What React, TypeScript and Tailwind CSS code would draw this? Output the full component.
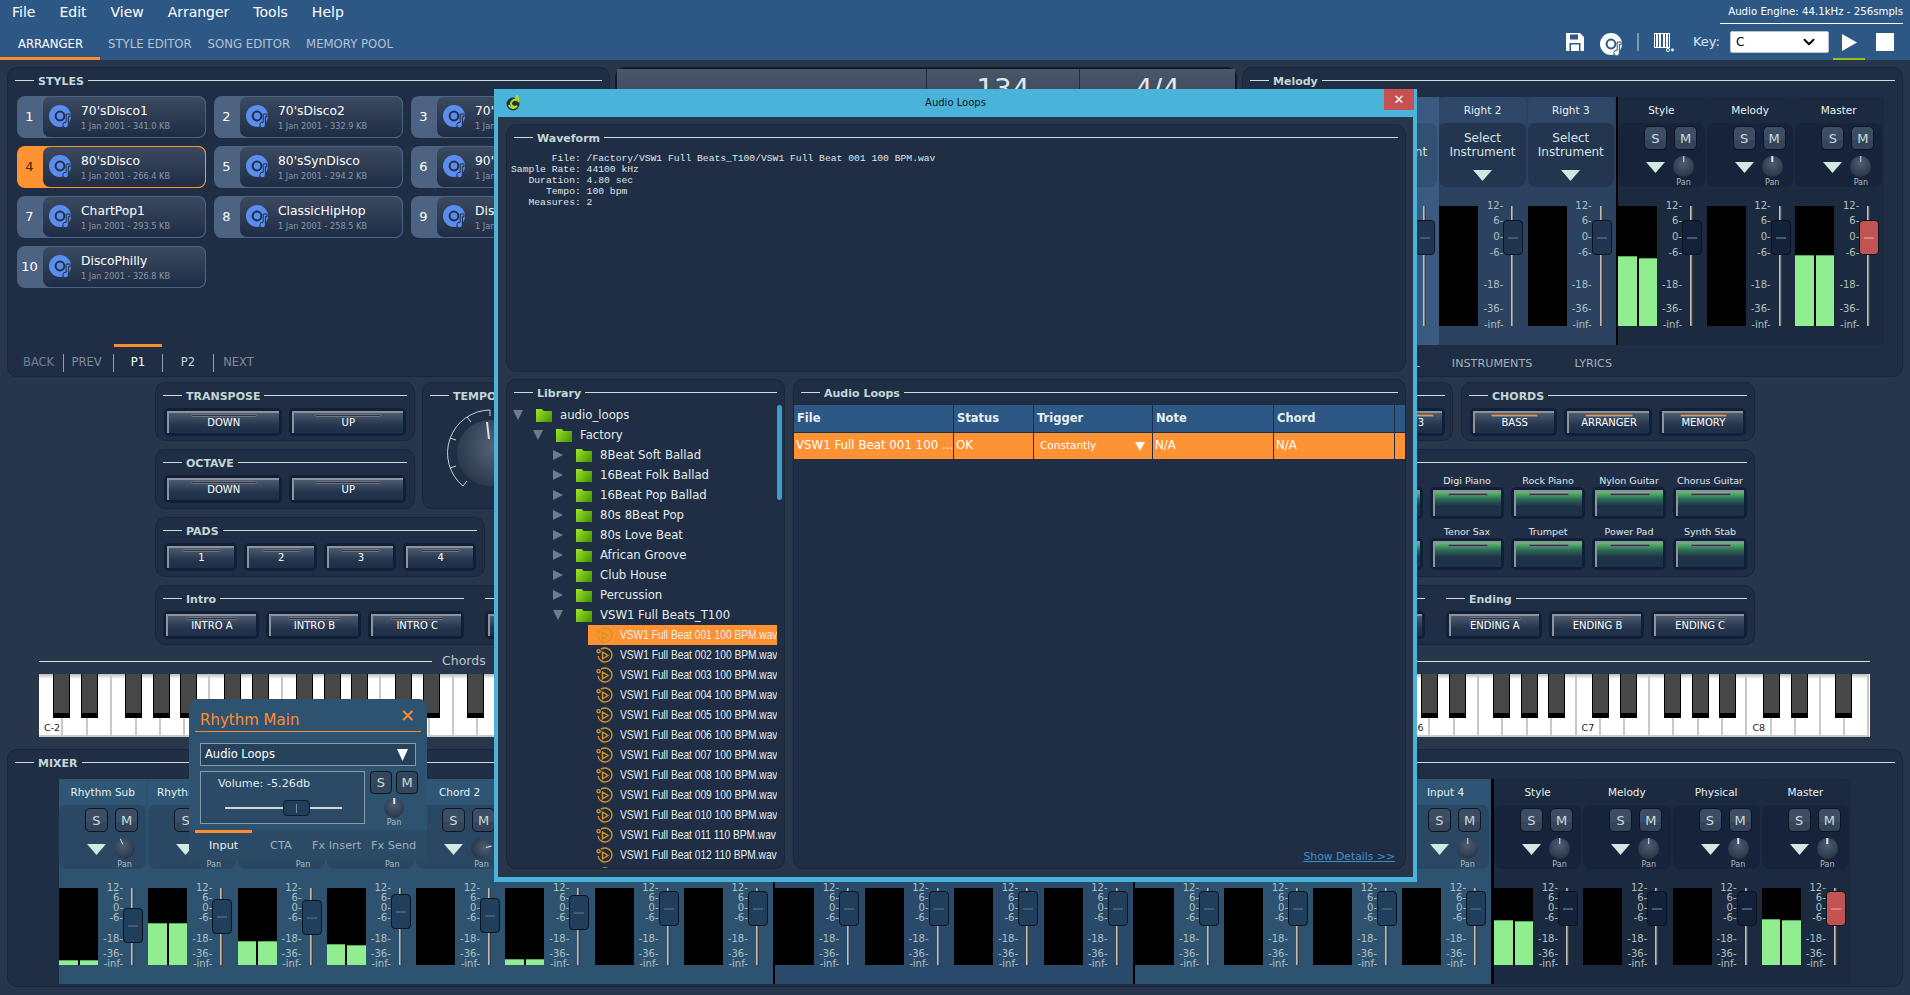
import React from "react";
import { ChevronDown } from "lucide-react";

const BOLD = "font-['DejaVu_Sans',sans-serif] font-bold";

function Section({
  title,
  className = "",
  children,
}: {
  title: string;
  className?: string;
  children?: React.ReactNode;
}) {
  return (
    <section
      className={`flex flex-col rounded-[10px] border border-[#19263a] bg-[#1f2e45] px-[7px] ${className}`}
    >
      <Title text={title} />
      {children}
    </section>
  );
}

function Title({ text }: { text: string }) {
  return (
    <div className="flex h-[25px] shrink-0 items-center gap-[4px]">
      <div className="h-px w-[19px] bg-[#c9e0dc]" />
      <span className={`${BOLD} pt-[2px] text-[11px] leading-none text-[#c3d8d5]`}>
        {text}
      </span>
      <div className="h-px flex-1 bg-[#c9e0dc]" />
    </div>
  );
}

function Btn({
  label,
  className = "",
  led = "gray",
  green = false,
}: {
  label?: string;
  className?: string;
  led?: "gray" | "orange";
  green?: boolean;
}) {
  return (
    <div
      className={`rounded-[5px] bg-[#0f2039] p-[3px] ${className}`}
    >
      <div
        className={`relative flex h-full items-center justify-center border-l-2 border-t-2 border-[#8d929b] text-[10px] leading-none text-white ${
          green
            ? "bg-[linear-gradient(#5cc06c_0%,#2c6a55_30%,#1f3049_60%)]"
            : "bg-[linear-gradient(#4c5b6e_0%,#24354d_60%,#1e2e46_100%)]"
        }`}
      >
        <div
          className={`absolute left-[20%] right-[20%] top-[1px] h-[3px] rounded-full border border-[#6f7480] ${
            led === "orange" ? "bg-[#ff8c2e]" : "bg-[#2a3342]"
          }`}
        />
        {label}
      </div>
    </div>
  );
}

function DiscIcon({ color = "#5b8def", hole = "#1f2e45" }: { color?: string; hole?: string }) {
  return (
    <svg viewBox="0 0 26 26" className="h-[26px] w-[26px] shrink-0">
      <circle cx="11" cy="12" r="11" fill={color} />
      <circle cx="11" cy="12" r="4.4" fill="none" stroke={hole} strokeWidth="2" />
      <path d="M18 10h3v3l-1.6-.6V21a2.8 2.8 0 1 1-2.2-2.7V10z" fill={color} stroke={hole} strokeWidth="1" />
    </svg>
  );
}

const styles = [
  ["70'sDisco1", "1 Jan 2001 - 341.0 KB"],
  ["70'sDisco2", "1 Jan 2001 - 332.9 KB"],
  ["70'sDisco3", "1 Jan 2001 - 301.1 KB"],
  ["80'sDisco", "1 Jan 2001 - 266.4 KB"],
  ["80'sSynDisco", "1 Jan 2001 - 294.2 KB"],
  ["90'sDisco", "1 Jan 2001 - 287.6 KB"],
  ["ChartPop1", "1 Jan 2001 - 293.5 KB"],
  ["ClassicHipHop", "1 Jan 2001 - 258.5 KB"],
  ["DiscoFunk", "1 Jan 2001 - 310.2 KB"],
  ["DiscoPhilly", "1 Jan 2001 - 326.8 KB"],
];

function StyleCard({ n, name, sub }: { n: number; name: string; sub: string }) {
  const active = n === 4;
  return (
    <div
      className={`flex h-[42px] w-[189px] rounded-[8px] ${active ? "bg-[#ff9233]" : "bg-[#4d6382]"}`}
    >
      <div
        className={`flex w-[25px] items-center justify-center text-[13px] ${active ? "text-[#3a2a15]" : "text-white"}`}
      >
        {n}
      </div>
      <div
        className={`flex flex-1 items-center gap-[6px] rounded-[8px] border bg-[linear-gradient(#3b4a60,#1e2d45)] pl-[6px] ${
          active ? "border-[#ff9233]" : "border-[#4d6382]"
        }`}
      >
        <DiscIcon />
        <div className="flex flex-col">
          <span className="pt-[1px] text-[12.3px] leading-[17px] text-white">{name}</span>
          <span className="text-[8.2px] leading-[13px] text-[#8b96a5]">{sub}</span>
        </div>
      </div>
    </div>
  );
}

const scaleLabels = ["12-", "6-", "0-", "-6-", "-18-", "-36-", "-inf-"];
const tallPos = [0, 15, 31, 47, 79, 103, 119];
const shortPos = [0, 10, 20, 30, 51, 66, 76];

type ChannelProps = {
  name: string;
  tall?: boolean;
  select?: boolean;
  tone: "sel" | "mid" | "dark" | "blue" | "navy";
  levels?: [number, number];
  fader: number;
  red?: boolean;
  pan?: number;
};

const tones = {
  sel: { root: "bg-[#3a5a80]", head: "bg-[#3a5a80]", body: "bg-[#334f72]", thumb: "bg-[#203650]" },
  mid: { root: "bg-[#2b4261]", head: "bg-[#2f4768]", body: "bg-[#24364f]", thumb: "bg-[#203650]" },
  dark: { root: "bg-[#1c2a3f]", head: "bg-[#1c2a40]", body: "bg-[#16233a]", thumb: "bg-[#14213a]" },
  blue: { root: "bg-[#2e5370]", head: "bg-[#2f5775]", body: "bg-[#2a4763]", thumb: "bg-[#1f3f5c]" },
  navy: { root: "bg-[#2a4a6c]", head: "bg-[#2c4f70]", body: "bg-[#26425f]", thumb: "bg-[#1f3f5c]" },
};

function Knob({ angle = 0, size = "md" }: { angle?: number; size?: "md" | "sm" }) {
  return (
    <div
      style={{ rotate: `${angle}deg` }}
      className={`relative rounded-full bg-[radial-gradient(circle_at_50%_35%,#4e5d72,#1f2b3d)] ${
        size === "md" ? "h-[21px] w-[21px]" : "h-[20px] w-[20px]"
      }`}
    >
      <div className="absolute left-1/2 top-0 h-[6px] w-[1.5px] -translate-x-1/2 bg-[#dfe8e8]" />
    </div>
  );
}

function SmBtn({ t }: { t: string }) {
  return (
    <div className="flex h-[24px] w-[23px] items-center justify-center rounded-[5px] border border-[#0c1522] bg-[linear-gradient(#3d4d63_60%,#34445a_60%)] text-[13px] leading-none text-[#c9dad9]">
      {t}
    </div>
  );
}

function Arrow({ className = "" }: { className?: string }) {
  return (
    <svg viewBox="0 0 19 11" className={`h-[11px] w-[19px] ${className}`}>
      <polygon points="0,0 19,0 9.5,11" fill="#d2e8e2" />
    </svg>
  );
}

function Channel({ name, tall, select, tone, levels, fader, red, pan = 0 }: ChannelProps) {
  const c = tones[tone];
  const pos = tall ? tallPos : shortPos;
  return (
    <div className={`flex min-w-0 flex-1 flex-col ${c.root}`}>
      <div
        className={`mr-[2px] flex h-[26px] items-center justify-center rounded-t-[6px] text-[10.5px] leading-none text-[#e8f0f0] ${c.head}`}
      >
        {name}
      </div>
      <div className={`mr-[2px] h-[64px] rounded-[8px] ${c.body}`}>
        {select ? (
          <div className="flex flex-col items-center pt-[8px] text-center text-[12px] leading-[14px] text-[#d5e2e2]">
            <span>Select</span>
            <span>Instrument</span>
            <Arrow className="mt-[11px]" />
          </div>
        ) : (
          <div className="flex flex-col pl-[26px] pt-[3px]">
            <div className="flex gap-[7px]">
              <SmBtn t="S" />
              <SmBtn t="M" />
            </div>
            <div className="mt-[6px] flex items-start gap-[8px] pl-[2px]">
              <Arrow className="mt-[6px] shrink-0" />
              <div className="flex flex-col items-center">
                <Knob angle={pan} />
                <span className="text-[8px] leading-[11px] text-[#aebcbc]">Pan</span>
              </div>
            </div>
          </div>
        )}
      </div>
      <div className={`flex py-[19px] ${tall ? "h-[158px]" : "h-[115px]"}`}>
        <div className="flex w-[39px] items-end gap-[2px] bg-black">
          {levels &&
            levels.map((h, i) => (
              <div
                key={i}
                style={{ height: h }}
                className="flex-1 border-t border-[#5fa860] bg-[#90ee90]"
              />
            ))}
        </div>
        <div className="relative w-[25px]">
          {scaleLabels.map((s, i) => (
            <span
              key={s}
              style={{ top: pos[i] - 6 }}
              className="absolute right-0 text-[10px] leading-[12px] text-[#b0c0c0]"
            >
              {s}
            </span>
          ))}
        </div>
        <div className="relative w-[20px]">
          <div className="absolute bottom-0 left-[8px] top-0 w-[3px] bg-[linear-gradient(90deg,#d8d8d8,#777_60%,#111)]" />
          <div
            style={{ top: fader }}
            className={`absolute left-0 flex h-[35px] w-[20px] items-center justify-center rounded-[4px] border border-[#0b1320] ${
              red ? "bg-[#c25353]" : c.thumb
            }`}
          >
            <div className={`h-[2px] w-[10px] ${red ? "bg-[#d98080]" : "bg-[#4a5a6c]"}`} />
          </div>
        </div>
      </div>
    </div>
  );
}

const whiteKeys = Array.from({ length: 75 });
const blackOffsets = [14, 42, 86, 114, 141];
const blackKeys: number[] = [];
for (let o = 0; o < 11; o++) {
  blackOffsets.forEach((b, i) => {
    const x = o * 171 + b;
    if (x < 1820 && !(o === 10 && i > 2)) blackKeys.push(x);
  });
}
const octaveLabels = ["C-2", "C-1", "C0", "C1", "C2", "C3", "C4", "C5", "C6", "C7", "C8"];

function Keyboard() {
  return (
    <div className="relative ml-[39px] flex h-[63px] w-[1831px] bg-white">
      {whiteKeys.map((_, i) => (
        <div
          key={i}
          className="relative h-full flex-1 border-b-2 border-r-2 border-[#c9c9c9] bg-[linear-gradient(#bbb_0,#fff_5px)]"
        >
          {i % 7 === 0 && (
            <span className="absolute bottom-[3px] left-[5px] text-[9.5px] leading-none text-[#222]">
              {octaveLabels[i / 7]}
            </span>
          )}
        </div>
      ))}
      {blackKeys.map((x) => (
        <div
          key={x}
          style={{ left: x }}
          className="absolute top-0 h-[44px] w-[17px] border-x border-b-[5px] border-black bg-[#474747]"
        />
      ))}
    </div>
  );
}

function FileIcon() {
  return (
    <svg viewBox="0 0 17 17" className="h-[17px] w-[17px] shrink-0" fill="none" stroke="#d4951f" strokeWidth="1.4">
      <path d="M5 2.2A7 7 0 1 1 2 9" />
      <circle cx="2.6" cy="4.2" r="1.6" />
      <polygon points="6.5,5.2 12,8.5 6.5,11.8" />
    </svg>
  );
}

function Folder() {
  return (
    <svg viewBox="0 0 16 13" className="h-[13px] w-[16px] shrink-0">
      <defs>
        <linearGradient id="fg" x1="0" y1="0" x2="1" y2="0.6">
          <stop offset="0" stopColor="#a2e52a" />
          <stop offset="1" stopColor="#4f9e05" />
        </linearGradient>
      </defs>
      <path d="M0 0h6l1.5 2H16v11H0z" fill="url(#fg)" />
    </svg>
  );
}

function TreeArrow({ open }: { open: boolean }) {
  return (
    <svg viewBox="0 0 10 10" className="h-[10px] w-[10px] shrink-0">
      <polygon points={open ? "0,0 10,0 5,10" : "0,0 10,5 0,10"} fill="#6f7b88" />
    </svg>
  );
}

const folders = [
  "8Beat Soft Ballad",
  "16Beat Folk Ballad",
  "16Beat Pop Ballad",
  "80s 8Beat Pop",
  "80s Love Beat",
  "African Groove",
  "Club House",
  "Percussion",
];

const files = [
  "001 100", "002 100", "003 100", "004 100", "005 100", "006 100", "007 100",
  "008 100", "009 100", "010 100", "011 110", "012 110",
];

function TreeRow({ depth, name, open }: { depth: number; name: string; open: boolean }) {
  const pad = ["pl-[6px]", "pl-[26px]", "pl-[46px]"][depth];
  return (
    <div className={`flex h-[20px] items-center ${pad} text-[11.7px] text-[#e4ecec]`}>
      <TreeArrow open={open} />
      <span className="w-[13px]" />
      <Folder />
      <span className="ml-[8px] whitespace-nowrap pt-[1px]">{name}</span>
    </div>
  );
}

function LoopsDialog() {
  return (
    <div className="absolute left-[494px] top-[89px] flex h-[793px] w-[923px] flex-col bg-[#4ab3da] px-[4px] pb-[5px]">
      <div className="grid h-[28px] shrink-0 grid-cols-[1fr_auto_1fr] items-center">
        <svg viewBox="0 0 16 16" className="ml-[7px] h-[16px] w-[16px]">
          <circle cx="8" cy="9" r="6.5" fill="#26313a" />
          <path d="M4 10a4.5 4.5 0 0 0 8 1A4 4 0 0 1 6 9a4 4 0 0 1 5-4L12 1c1 2 2 4 1 6" fill="none" stroke="#a6e02a" strokeWidth="2" />
        </svg>
        <span className="text-[10px] leading-none text-[#101820]">Audio Loops</span>
        <div className="flex h-full justify-end pb-[7px]">
          <div className="mr-[-1px] flex w-[30px] items-center justify-center bg-[#c75050] text-[13px] font-bold leading-none text-white">
            ✕
          </div>
        </div>
      </div>
      <div className="flex min-h-0 flex-1 flex-col gap-[7px] bg-[#27364b] pb-[8px] pl-[8px] pr-[7px] pt-[7px]">
        <Section title="Waveform" className="h-[248px] shrink-0">
          <div className="-ml-[3px] mt-[3px] whitespace-pre font-['Liberation_Mono',monospace] text-[9.7px] leading-[11px] text-[#dfe6e6]">
            {`       File: /Factory/VSW1 Full Beats_T100/VSW1 Full Beat 001 100 BPM.wav
Sample Rate: 44100 kHz
   Duration: 4.80 sec
      Tempo: 100 bpm
   Measures: 2`}
          </div>
        </Section>
        <div className="flex min-h-0 flex-1 gap-[8px]">
          <section className="flex w-[279px] shrink-0 flex-col rounded-[10px] border border-[#19263a] bg-[#1f2e45]">
            <div className="px-[7px]">
              <Title text="Library" />
            </div>
            <div className="flex min-h-0 flex-1 pr-[2px]">
              <div className="min-w-0 flex-1 overflow-hidden">
                <TreeRow depth={0} name="audio_loops" open />
                <TreeRow depth={1} name="Factory" open />
                {folders.map((f) => (
                  <TreeRow key={f} depth={2} name={f} open={false} />
                ))}
                <TreeRow depth={2} name="VSW1 Full Beats_T100" open />
                {files.map((f, i) => (
                  <div
                    key={f}
                    className={`ml-[81px] flex h-[20px] items-center pl-[8px] ${
                      i === 0 ? "bg-[#ff9233]" : ""
                    }`}
                  >
                    <FileIcon />
                    <span className="ml-[7px] scale-y-[1.25] whitespace-nowrap font-['Liberation_Sans',sans-serif] text-[10.2px] leading-none text-[#e8eeee]">
                      {`VSW1 Full Beat ${f} BPM.wav`}
                    </span>
                  </div>
                ))}
                <div className="ml-[89px] pt-[2px]">
                  <FileIcon />
                </div>
              </div>
              <div className="h-[95px] w-[5px] shrink-0 rounded-full bg-[#3f9cc4]" />
            </div>
          </section>
          <section className="flex min-w-0 flex-1 flex-col rounded-[10px] border border-[#19263a] bg-[#1f2e45]">
            <div className="px-[7px]">
              <Title text="Audio Loops" />
            </div>
            <div className="grid grid-cols-[159px_79px_118px_120px_120px_1fr] gap-[1px] text-[11.8px] text-white">
              {["File", "Status", "Trigger", "Note", "Chord", ""].map((h, i) => (
                <div
                  key={i}
                  className={`${BOLD} flex h-[27px] items-center bg-[#2d5885] px-[3px] pt-[1px] text-[11.5px] text-[#e8f0f0]`}
                >
                  {h}
                </div>
              ))}
              <div className="flex h-[26px] items-center overflow-hidden whitespace-nowrap bg-[#ff9233] px-[2px]">
                VSW1 Full Beat 001 100 ...
              </div>
              <div className="flex h-[26px] items-center bg-[#ff9233] px-[2px]">OK</div>
              <div className="flex h-[26px] items-center justify-between bg-[#ff9233] pl-[6px] pr-[7px] text-[10.5px]">
                Constantly
                <svg viewBox="0 0 10 9" className="h-[9px] w-[10px]">
                  <polygon points="0,0 10,0 5,9" fill="#fff" />
                </svg>
              </div>
              <div className="flex h-[26px] items-center bg-[#ff9233] px-[2px]">N/A</div>
              <div className="flex h-[26px] items-center bg-[#ff9233] px-[2px]">N/A</div>
              <div className="h-[26px] bg-[#ff9233]" />
            </div>
            <div className="mt-auto flex justify-end pb-[3px] pr-[10px] text-[10.8px] text-[#3f8fc4] underline">
              Show Details &gt;&gt;
            </div>
          </section>
        </div>
      </div>
    </div>
  );
}

function RhythmPopup() {
  return (
    <div className="absolute left-[189px] top-[699px] flex h-[161px] w-[238px] flex-col rounded-t-[8px] bg-[#2e5370]">
      <div className="mx-[6px] flex h-[33px] shrink-0 items-end justify-between border-b border-[#ff8c2e] pl-[5px] pr-[6px]">
        <span className="text-[15px] leading-[22px] text-[#ff8c2e]">Rhythm Main</span>
        <span className="pb-[6px] text-[18px] font-bold leading-none text-[#ff8c2e]">✕</span>
      </div>
      <div className="mx-[11px] mt-[11px] flex h-[23px] shrink-0 items-center justify-between border border-[#8a9aa6] bg-[#25425c] pl-[4px] pr-[7px] text-[11.5px] text-white">
        Audio Loops
        <svg viewBox="0 0 11 12" className="h-[12px] w-[11px]">
          <polygon points="0,0 11,0 5.5,12" fill="#fff" />
        </svg>
      </div>
      <div className="ml-[11px] mt-[5px] flex shrink-0 gap-[5px]">
        <div className="relative h-[53px] w-[165px] border border-[#8a9aa6] bg-[#2a4a66]">
          <div className="pl-[17px] pt-[4px] text-[11.2px] leading-[16px] text-[#e4ecec]">Volume: -5.26db</div>
          <div className="absolute left-[24px] top-[35px] h-[2px] w-[117px] bg-[#cfd6d6]" />
          <div className="absolute left-[82px] top-[28px] flex h-[16px] w-[27px] items-center justify-center rounded-[4px] border border-[#101a2a] bg-[#1f3f5c]">
            <div className="h-[9px] w-[1px] bg-[#7a8a9a]" />
          </div>
        </div>
        <div className="flex flex-col items-center">
          <div className="flex gap-[4px]">
            <div className="flex h-[23px] w-[22px] items-center justify-center rounded-[4px] border border-[#0c1522] bg-[#34465c] text-[13px] text-[#c9dad9]">S</div>
            <div className="flex h-[23px] w-[22px] items-center justify-center rounded-[4px] border border-[#0c1522] bg-[#34465c] text-[13px] text-[#c9dad9]">M</div>
          </div>
          <div className="mt-[4px]">
            <Knob size="sm" />
          </div>
          <span className="text-[8px] leading-[10px] text-[#aebcbc]">Pan</span>
        </div>
      </div>
      <div className="relative mt-auto flex h-[30px] items-center bg-[#2a4a66] pt-[3px] text-[11.3px] text-[#9fb0bb]">
        <div className="absolute left-[6px] top-0 h-[3px] w-[57px] bg-[#ff8c2e]" />
        <span className="ml-[20px] w-[61px] text-[#e8f0f0]">Input</span>
        <span className="w-[42px]">CTA</span>
        <span className="w-[59px]">Fx Insert</span>
        <span>Fx Send</span>
      </div>
    </div>
  );
}

const topChannels: ChannelProps[] = [
  { name: "Right 1", select: true, tall: true, tone: "sel", fader: 14 },
  { name: "Right 2", select: true, tall: true, tone: "mid", fader: 14 },
  { name: "Right 3", select: true, tall: true, tone: "mid", fader: 14 },
];
const topDark: ChannelProps[] = [
  { name: "Style", tall: true, tone: "dark", levels: [70, 68], fader: 14 },
  { name: "Melody", tall: true, tone: "dark", fader: 14 },
  { name: "Master", tall: true, tone: "dark", levels: [71, 71], fader: 14, red: true },
];

const mixA: ChannelProps[] = [
  { name: "Rhythm Sub", tone: "blue", levels: [5, 5], fader: 20, pan: -25 },
  { name: "Rhythm Main", tone: "blue", levels: [42, 42], fader: 11 },
  { name: "Bass", tone: "blue", levels: [24, 24], fader: 12 },
  { name: "Chord 1", tone: "blue", levels: [21, 20], fader: 6 },
  { name: "Chord 2", tone: "blue", fader: 10, pan: 75 },
  { name: "Pad", tone: "blue", levels: [6, 6], fader: 7 },
  { name: "Phrase 1", tone: "blue", fader: 3 },
  { name: "Phrase 2", tone: "blue", fader: 3 },
];
const mixB: ChannelProps[] = ["Left", "Right 1", "Right 2", "Right 3"].map((name) => ({
  name,
  tone: "navy",
  fader: 3,
}));
const mixC: ChannelProps[] = ["Input 1", "Input 2", "Input 3", "Input 4"].map((name) => ({
  name,
  tone: "blue",
  fader: 3,
}));
const mixDark: ChannelProps[] = [
  { name: "Style", tone: "dark", levels: [45, 44], fader: 3 },
  { name: "Melody", tone: "dark", fader: 3 },
  { name: "Physical", tone: "dark", fader: 3 },
  { name: "Master", tone: "dark", levels: [46, 45], fader: 3, red: true },
];

const instruments = [
  ["Grand Piano", "Digi Piano", "Rock Piano", "Nylon Guitar", "Chorus Guitar"],
  ["Alto Sax", "Tenor Sax", "Trumpet", "Power Pad", "Synth Stab"],
];

export default function App() {
  return (
    <div className="relative h-[995px] w-[1910px] overflow-hidden bg-[#27364b] font-['DejaVu_Sans',sans-serif] text-white">
      {/* Top bar */}
      <header className="flex h-[60px] justify-between bg-[#2d5885]">
        <div className="flex flex-col">
          <nav className="flex h-[25px] items-center gap-[24px] pl-[12px] text-[14px] text-white">
            <span>File</span>
            <span>Edit</span>
            <span>View</span>
            <span>Arranger</span>
            <span>Tools</span>
            <span>Help</span>
          </nav>
          <div className="mt-auto flex h-[35px] text-[11.7px] text-[#b4c3d2]">
            <div className="flex w-[100px] items-center border-b-[3px] border-[#ff8c2e] pl-[18px] pt-[7px] text-white">ARRANGER</div>
            <div className="ml-[8px] flex items-center gap-[16px] pt-[4px]">
              <span>STYLE EDITOR</span>
              <span>SONG EDITOR</span>
              <span>MEMORY POOL</span>
            </div>
          </div>
        </div>
        <div className="flex flex-col items-end pr-[7px]">
          <div className="flex h-[24px] w-[183px] items-center justify-end border-b border-white text-[10.2px] text-white">
            Audio Engine: 44.1kHz - 256smpls
          </div>
          <div className="mr-[9px] flex h-[36px] items-start pt-[7px]">
            <svg viewBox="0 0 18 18" className="mt-[2px] h-[18px] w-[18px]">
              <path d="M0 0h14l4 4v14H0z" fill="#fff" />
              <rect x="4" y="1.5" width="8" height="5" fill="#2d5885" />
              <rect x="3.5" y="10" width="11" height="8" fill="#2d5885" />
              <rect x="5" y="11.5" width="8" height="6.5" fill="#fff" />
            </svg>
            <div className="ml-[16px] mt-[1px]">
              <DiscIcon color="#fff" hole="#2d5885" />
            </div>
            <div className="ml-[11px] mt-[2px] h-[18px] w-[2px] bg-[#7d97b3]" />
            <svg viewBox="0 0 20 20" className="ml-[15px] mt-[2px] h-[20px] w-[20px]">
              <rect x="0.5" y="0.5" width="15" height="14" fill="none" stroke="#fff" />
              <path d="M3 1v13M6 1v13M10 1v13M13 1v13" stroke="#fff" strokeWidth="2" />
              <circle cx="14" cy="17" r="1.6" fill="none" stroke="#fff" />
              <circle cx="18.5" cy="17" r="1.4" fill="#fff" />
            </svg>
            <span className="ml-[19px] mt-[2px] text-[13px] leading-[18px] text-[#dce6ee]">Key:</span>
            <div className="ml-[10px] flex h-[22px] w-[99px] items-center justify-between rounded-[2px] border border-[#b8c4cf] bg-white pl-[5px] pr-[10px] text-[12px] text-black">
              C
              <ChevronDown className="h-[18px] w-[18px]" strokeWidth={2.5} />
            </div>
            <div className="ml-[4px] flex h-[29px] w-[32px] justify-center border-b-2 border-[#8fc31f]">
              <svg viewBox="0 0 15 17" className="mt-[3px] h-[17px] w-[15px]">
                <polygon points="0,0 15,8.5 0,17" fill="#fff" />
              </svg>
            </div>
            <div className="ml-[11px] mt-[2px] h-[18px] w-[18px] bg-white" />
          </div>
        </div>
      </header>

      <main className="flex flex-col">
        {/* Top row */}
        <div className="mx-[7px] mt-[7px] flex h-[310px] gap-[5px]">
          <Section title="STYLES" className="w-[603px] shrink-0">
            <div className="relative flex min-h-0 flex-1 flex-col">
              <div className="ml-[2px] mt-[3px] grid grid-cols-[189px_189px_189px] gap-x-[8px] gap-y-[8px]">
                {styles.map((s, i) => (
                  <StyleCard key={s[0]} n={i + 1} name={s[0]} sub={s[1]} />
                ))}
              </div>
              <div className="mt-auto flex h-[26px] items-center text-[11.5px] text-[#7f8c9c]">
                <span className="w-[48px] pl-[8px] text-[#68809c]">BACK</span>
                <span className="flex h-[18px] w-[50px] items-center justify-center border-l border-[#8fa0b0] pr-[4px]">PREV</span>
                <span className="relative flex h-[18px] w-[50px] items-center justify-center border-x border-[#8fa0b0] text-white">
                  <span className="absolute -top-[10px] left-0 right-0 h-[3px] bg-[#ff8c2e]" />
                  P1
                </span>
                <span className="flex h-[18px] w-[50px] items-center justify-center text-[#c8d4dc]">P2</span>
                <span className="flex h-[18px] w-[50px] items-center justify-center border-l border-[#8fa0b0]">NEXT</span>
              </div>
            </div>
          </Section>

          <section className="h-full w-[622px] shrink-0 rounded-[10px] border-2 border-[#10192a] bg-[#1f2e45]">
            <div className="grid h-[62px] grid-cols-[310px_153px_1fr] bg-[linear-gradient(#4b5669,#2d3b52)] text-[28px] leading-none text-[#dfe7e7]">
              <div className="border-r border-[#1f2e45]" />
              <div className="flex justify-center border-r border-[#1f2e45] pt-[7px]">134</div>
              <div className="flex justify-center pt-[7px]">4/4</div>
            </div>
          </section>

          <Section title="Melody" className="min-w-0 flex-1">
            <div className="ml-[101px] mt-[4px] flex h-[248px]">
              {/* 3 split channels then the fixed group */}
              <div className="flex w-[265px]">
                {topChannels.map((c) => (
                  <Channel key={c.name} {...c} />
                ))}
              </div>
              <div className="w-[2px] bg-black" />
              <div className="flex w-[266px]">
                {topDark.map((c) => (
                  <Channel key={c.name} {...c} />
                ))}
              </div>
            </div>
            <div className="flex flex-1 items-center justify-end gap-[32px] pr-[283px] pt-[8px] text-[11.2px] text-[#a4b0bc]">
              <span>CONTROL</span>
              <span>INSTRUMENTS</span>
              <span className="ml-[10px]">LYRICS</span>
            </div>
          </Section>
        </div>

        {/* Controls */}
        <div className="mx-[155px] mt-[5px] flex h-[195px] justify-between">
          <div className="flex w-[560px] flex-col gap-[8px]">
            <div className="flex h-[127px] gap-[7px]">
              <div className="flex w-[260px] shrink-0 flex-col gap-[8px]">
                <Section title="TRANSPOSE" className="h-[59px]">
                  <div className="flex gap-[7px] px-[1px]">
                    <Btn label="DOWN" className="h-[28px] flex-1" />
                    <Btn label="UP" className="h-[28px] flex-1" />
                  </div>
                </Section>
                <Section title="OCTAVE" className="h-[60px]">
                  <div className="flex gap-[7px] px-[1px]">
                    <Btn label="DOWN" className="h-[28px] flex-1" />
                    <Btn label="UP" className="h-[28px] flex-1" />
                  </div>
                </Section>
              </div>
              <Section title="TEMPO" className="flex-1">
                <svg viewBox="0 0 130 100" className="h-[100px] w-[130px]">
                  <defs>
                    <radialGradient id="tk" cx="0.6" cy="0.4" r="0.8">
                      <stop offset="0" stopColor="#55657a" />
                      <stop offset="1" stopColor="#202c40" />
                    </radialGradient>
                  </defs>
                  <circle cx="60" cy="45" r="33" fill="url(#tk)" />
                  <path d="M33 78A43 43 0 0 1 60 2" fill="none" stroke="#c8d2d2" strokeWidth="1" />
                  <path d="M60 2v6M37 9l4 5M20 30l6 2M20 60l6-2M33 78l4-5" stroke="#c8d2d2" strokeWidth="1" />
                  <path d="M57 14l2 17" stroke="#d8e0e0" strokeWidth="2" />
                </svg>
              </Section>
            </div>
            <Section title="PADS" className="h-[60px] w-[330px]">
              <div className="flex gap-[7px] px-[1px]">
                {["1", "2", "3", "4"].map((p) => (
                  <Btn key={p} label={p} className="h-[28px] flex-1" />
                ))}
              </div>
            </Section>
          </div>
          <div className="flex w-[700px] flex-col gap-[8px]">
            <div className="flex h-[59px] gap-[8px]">
              <Section title="ACCOMPANIMENT" className="flex-1">
                <div className="flex justify-end gap-[7px]">
                  {["1", "2", "3"].map((p) => (
                    <Btn key={p} label={p} led="orange" className="h-[28px] w-[50px]" />
                  ))}
                </div>
              </Section>
              <Section title="CHORDS" className="w-[294px] shrink-0">
                <div className="flex gap-[7px] px-[1px]">
                  {["BASS", "ARRANGER", "MEMORY"].map((p) => (
                    <Btn key={p} label={p} led="orange" className="h-[28px] flex-1" />
                  ))}
                </div>
              </Section>
            </div>
            <Section title="INSTRUMENTS" className="h-[128px]">
              <div className="-mt-[1px] flex flex-col gap-[6px]">
                {instruments.map((row, r) => (
                  <div key={r} className="flex justify-end gap-[7px]">
                    {row.map((n) => (
                      <div key={n} className="flex w-[74px] flex-col items-center">
                        <span className="whitespace-nowrap text-[9.5px] leading-[13px] text-[#e0e8e8]">{n}</span>
                        <Btn green className="h-[32px] w-full" />
                      </div>
                    ))}
                  </div>
                ))}
              </div>
            </Section>
          </div>
        </div>

        <div className="mx-[155px] mt-[8px] flex h-[60px] justify-between rounded-[10px] border border-[#19263a] bg-[#1f2e45] px-[7px]">
          <div className="flex w-[301px] flex-col">
            <Title text="Intro" />
            <div className="flex gap-[7px]">
              {["INTRO A", "INTRO B", "INTRO C"].map((p) => (
                <Btn key={p} label={p} className="h-[28px] flex-1" />
              ))}
            </div>
          </div>
          <div className="flex w-[940px] flex-col">
            <Title text="Main" />
            <div className="flex gap-[7px]">
              {["MAIN A", "MAIN B", "MAIN C", "MAIN D"].map((p) => (
                <Btn key={p} label={p} className="h-[28px] flex-1" />
              ))}
            </div>
          </div>
          <div className="flex w-[301px] flex-col">
            <Title text="Ending" />
            <div className="flex gap-[7px]">
              {["ENDING A", "ENDING B", "ENDING C"].map((p) => (
                <Btn key={p} label={p} className="h-[28px] flex-1" />
              ))}
            </div>
          </div>
        </div>

        {/* Keyboard */}
        <div className="ml-[39px] mt-[7px] flex h-[18px] w-[1831px] items-center gap-[10px]">
          <div className="h-px w-[393px] bg-[#c9e0dc]" />
          <span className="pt-[1px] text-[12.5px] leading-none text-[#b8c8c8]">Chords</span>
          <div className="h-px flex-1 bg-[#c9e0dc]" />
        </div>
        <div className="mt-[4px]">
          <Keyboard />
        </div>

        {/* Mixer */}
        <Section title="MIXER" className="mx-[7px] mt-[12px] h-[238px]">
          <div className="ml-[44px] mt-[4px] flex h-[205px]">
            <div className="flex w-[714px]">
              {mixA.map((c) => (
                <Channel key={c.name} {...c} />
              ))}
            </div>
            <div className="w-[2px] bg-black" />
            <div className="flex w-[358px]">
              {mixB.map((c) => (
                <Channel key={c.name} {...c} />
              ))}
            </div>
            <div className="w-[2px] bg-black" />
            <div className="flex w-[356px]">
              {mixC.map((c) => (
                <Channel key={c.name} {...c} />
              ))}
            </div>
            <div className="w-[3px] bg-black" />
            <div className="flex w-[357px]">
              {mixDark.map((c) => (
                <Channel key={c.name} {...c} />
              ))}
            </div>
          </div>
        </Section>
      </main>

      <RhythmPopup />
      <LoopsDialog />
    </div>
  );
}
